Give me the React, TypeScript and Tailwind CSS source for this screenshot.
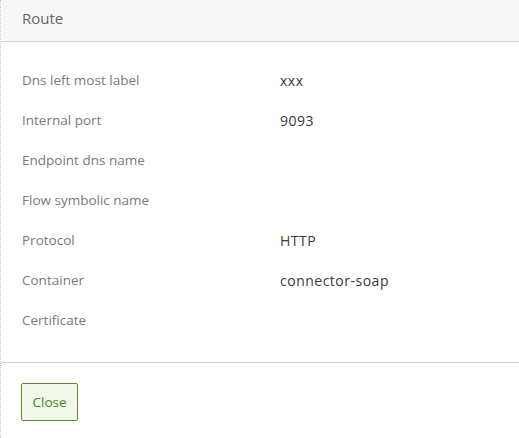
import React from 'react';

const rows: { label: string; value?: string }[] = [
  { label: 'Dns left most label', value: 'xxx' },
  { label: 'Internal port', value: '9093' },
  { label: 'Endpoint dns name' },
  { label: 'Flow symbolic name' },
  { label: 'Protocol', value: 'HTTP' },
  { label: 'Container', value: 'connector-soap' },
  { label: 'Certificate' },
];

export default function App() {
  return (
    <div className="w-[519px] h-[438px] bg-white border-l border-dotted border-[#c4c4c4] flex flex-col font-['Open_Sans',sans-serif] overflow-hidden">
      {/* Header */}
      <div className="h-[42px] shrink-0 bg-[#f6f6f6] border-b border-[#d6d6d6] flex items-center px-[21px] pb-[4px]">
        <h2 className="text-[15px] text-[#666] leading-none">Route</h2>
      </div>

      {/* Body */}
      <div className="flex-1 pt-[18px] px-[21px]">
        {rows.map((row) => (
          <div key={row.label} className="h-[40px] flex items-center">
            <div className="w-[258px] text-[13.5px] text-[#7a7a7a]">{row.label}</div>
            <div className="text-[14px] tracking-[0.5px] text-[#3a3a3a]">{row.value}</div>
          </div>
        ))}
      </div>

      {/* Footer */}
      <div className="h-[76px] shrink-0 border-t border-[#cfcfcf] px-[20px] pt-[20px]">
        <button className="w-[57px] h-[38px] rounded-[2px] border border-[#5b8c32] bg-[#f1f8ea] text-[13.5px] text-[#4f7d28]">
          Close
        </button>
      </div>
    </div>
  );
}
